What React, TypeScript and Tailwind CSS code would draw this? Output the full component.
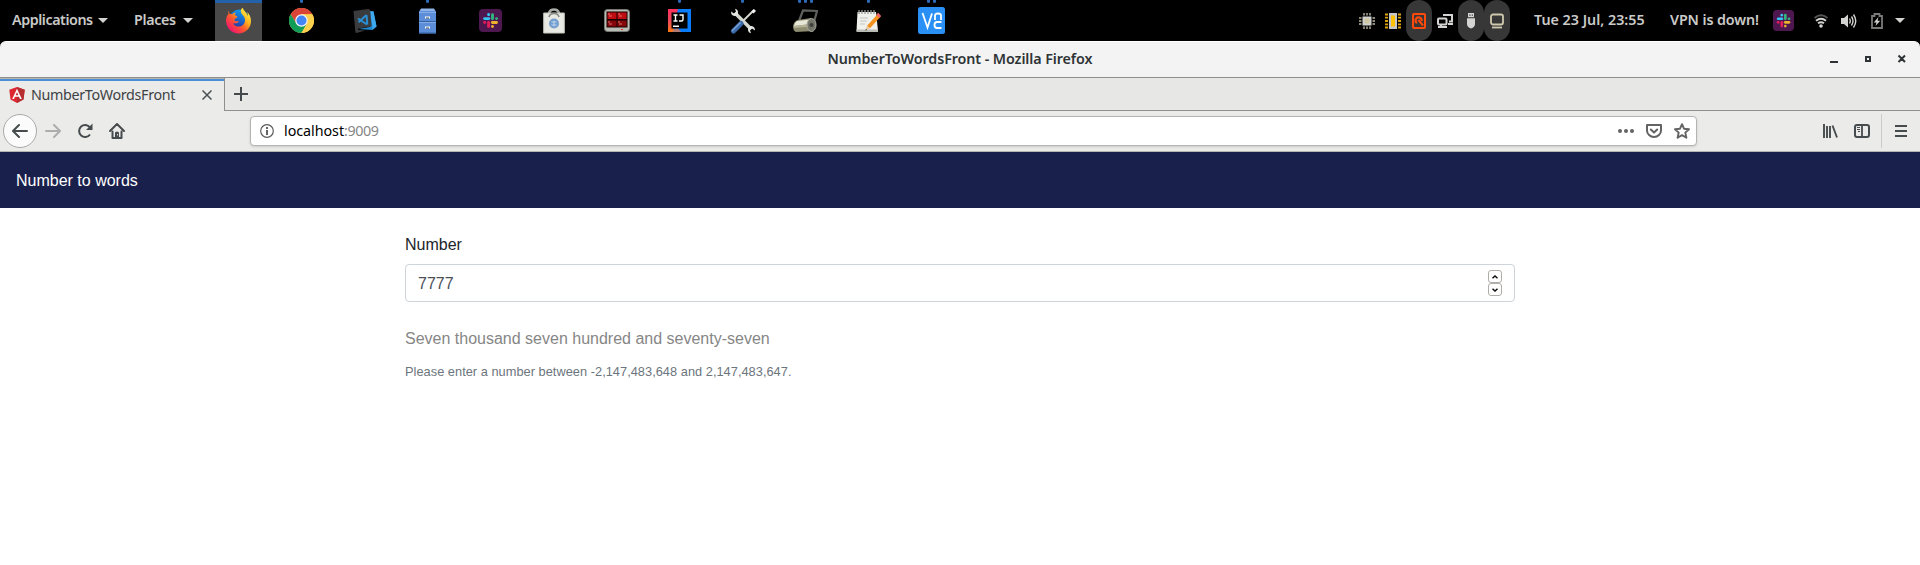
import type { ReactNode } from "react";

function Firefox() {
  return (
    <svg width="27" height="27" viewBox="0 0 27 27">
      <defs>
        <linearGradient id="ffBody" x1="0.9" y1="0.1" x2="0.2" y2="0.9">
          <stop offset="0" stopColor="#fff34a" />
          <stop offset="0.35" stopColor="#ffb31c" />
          <stop offset="0.62" stopColor="#ff5a2c" />
          <stop offset="1" stopColor="#f0186c" />
        </linearGradient>
        <linearGradient id="ffGlobe" x1="0.7" y1="0" x2="0.3" y2="1">
          <stop offset="0" stopColor="#0aa2f5" />
          <stop offset="1" stopColor="#2b2f9c" />
        </linearGradient>
      </defs>
      <circle cx="14" cy="12" r="9.5" fill="url(#ffGlobe)" />
      <path
        d="M3.2 3.6C3 5 3.200 6 3.600 6.800C1.500 9 .8 12 1.100 15C1.800 21.500 7 26.400 13.500 26.400C20.500 26.400 26 21 26 14C26 9.500 24 6.500 22 5C23 7 23 8 22.800 9C22 5.500 18.500 3.500 17.500 .7C15.500 2 15.300 4.500 16.500 6.500C17.800 8.600 20.500 10 20 14C19.500 18 16 20 12.800 19.500C9.500 19 8.400 17 8.600 16C11 17 12.500 16 14 14.800C13 13.600 11.500 14.600 9.800 13.700C9 12.800 9.500 11.500 12.500 10.200C12.400 8.800 10.800 8.800 10 8.200C9.700 7.200 10.300 6.200 11.200 5.600C9.300 5.600 8 6.400 7.300 7.400C6.500 7 5.500 7 4.800 7.100C4 6 3.500 5 3.200 3.600Z"
        fill="url(#ffBody)"
      />
    </svg>
  );
}

function Chrome() {
  return (
    <svg width="25" height="25" viewBox="0 0 50 50">
      <circle cx="25" cy="25" r="25" fill="#fdd04e" />
      <path d="M3.300 12.500A25 25 0 0 1 46.700 12.500L25 12.500L14.500 31Z" fill="#da4437" />
      <path d="M3.300 12.500A25 25 0 0 0 25 50L36 31L25 25L14.500 31Z" fill="#109d58" />
      <path d="M25 12.500H46.700A25 25 0 0 1 25 50L36 31Z" fill="#fdd04e" />
      <circle cx="25" cy="25" r="12.500" fill="#f4f4f4" />
      <circle cx="25" cy="25" r="10" fill="#4285f4" />
    </svg>
  );
}

function VsCode() {
  return (
    <svg width="24" height="26" viewBox="0 0 24 26">
      <path d="M17 3L20.500 3.500L23.500 18.500L19.500 22L5 21L17 19Z" fill="#1f8ad2" />
      <path d="M17 3L20.500 3.500L23.500 18.500L19.800 21.500Z" fill="#3fa9f0" />
      <path d="M.5 3L15.500 1Q17 1 17.200 2.500L18.600 18.500L5 20.500V22L12 22.500L3.500 25Q2.500 25 2.300 23.500Z" fill="#3a3b3d" />
      <path d="M13.500 7L14.300 16.500M13.500 7L5.500 14.300M14 16.500L5 10.500" fill="none" stroke="#2b8fd6" strokeWidth="2" />
    </svg>
  );
}

function FileCabinet() {
  return (
    <svg width="17" height="26" viewBox="0 0 17 26">
      <path d="M2 .5H15L17 4H0Z" fill="#8fb4ea" />
      <rect y="3" width="17" height="22.500" fill="#5b8dd9" />
      <path d="M0 4.500H17M0 14.500H17" stroke="#88aee8" />
      <path d="M0 13.500H17M0 25H17" stroke="#335f9f" />
      <path d="M6 9.500H11M6 19.500H11" stroke="#fff" strokeWidth="2" />
      <path d="M7 10H10M7 20H10" stroke="#345" strokeWidth="1" />
    </svg>
  );
}

function SlackIcon({ size }: { size: number }) {
  return (
    <svg width={size} height={size} viewBox="0 0 23 23">
      <rect width="23" height="23" rx="4" fill="#4f1750" />
      <g strokeWidth="2.900" strokeLinecap="round">
        <path d="M5.600 9.600H9.800" stroke="#36c5f0" />
        <path d="M9.600 5.500V5.700" stroke="#36c5f0" />
        <path d="M13.500 5.600V9.700" stroke="#2eb67d" />
        <path d="M17.500 9.600H17.600" stroke="#2eb67d" />
        <path d="M13.400 13.500H17.500" stroke="#ecb22e" />
        <path d="M13.500 17.500V17.600" stroke="#ecb22e" />
        <path d="M9.600 13.500V17.600" stroke="#e01e5a" />
        <path d="M5.600 13.500H5.700" stroke="#e01e5a" />
      </g>
    </svg>
  );
}

function SoftwareBag() {
  return (
    <svg width="22" height="26" viewBox="0 0 22 26">
      <path d="M6 8V5Q7 1.500 11 1.500Q15 1.500 16 5V8" fill="none" stroke="#a9aba6" strokeWidth="2.500" />
      <path d="M.7 5H21.300V25H.7Z" fill="#e9e9e4" stroke="#c4c4bd" />
      <path d="M6 9Q7 5.500 11 5.500Q15 5.500 16 9" fill="none" stroke="#888a85" strokeWidth="1.700" />
      <circle cx="11" cy="15.500" r="5" fill="#729fcf" />
      <path d="M8.500 14H13.500M8.500 17H13.500M11 12.500V18.500" stroke="#dbe7f5" strokeWidth=".7" />
    </svg>
  );
}

function Terminator() {
  return (
    <svg width="26" height="23" viewBox="0 0 26 23">
      <rect x=".5" y=".5" width="25" height="22" rx="3" fill="#b9bbb5" stroke="#777a74" />
      <rect x="2.500" y="2.500" width="21" height="16" fill="#160000" />
      <path d="M3.500 3.500H12.500V10H3.500ZM13.500 3.500H22.500V10H13.500Z" fill="#c00d12" />
      <path d="M3.500 11.500H12.500V17.500H3.500ZM13.500 11.500H22.500V17.500H13.500Z" fill="#860609" />
      <path d="M4 5H6M5 7H8M14 5H16M15 7H18M4 13H6M5 15H8M14 13H16M15 15H18" stroke="#f2a0a0" strokeWidth=".7" />
      <path d="M17 20.500H19" stroke="#e33" />
    </svg>
  );
}

function IntelliJ() {
  return (
    <svg width="23" height="23" viewBox="0 0 23 23">
      <defs>
        <linearGradient id="ijLeft" x1="0" y1="0" x2="0" y2="1">
          <stop offset="0" stopColor="#fe315d" />
          <stop offset="0.5" stopColor="#f0455e" />
          <stop offset="1" stopColor="#f97a12" />
        </linearGradient>
      </defs>
      <path d="M0 0H11L9 23H0Z" fill="url(#ijLeft)" />
      <path d="M10 0H23V23H9L5 19Z" fill="#087cfa" />
      <path d="M4 23L9 18L13 23Z" fill="#b07a72" />
      <rect x="3.500" y="3.500" width="16" height="16" fill="#000" />
      <path d="M5.500 6H9.500M7.500 6V12M5.500 12H9.500M11.500 6H15V10.500Q15 12 13.500 12H11M5 17.200H11" fill="none" stroke="#fff" strokeWidth="1.400" />
    </svg>
  );
}

function Tools() {
  return (
    <svg width="26" height="26" viewBox="0 0 26 26">
      <path d="M5 5L21 21" stroke="#d3d7cf" strokeWidth="3.500" />
      <path d="M1 3.500Q1 7.500 4.500 8Q8 8 8 4.500Q8 1.500 5 .8L6 3.500L4 5.500Z" fill="#e6e8e3" />
      <path d="M25 22.500Q25 18.500 21.500 18Q18 18 18 21.500Q18 24.500 21 25.200L20 22.500L22 20.500Z" fill="#e6e8e3" />
      <path d="M24 2L13 13" stroke="#d8dad5" strokeWidth="1.800" />
      <path d="M25 2L22.500 4.500" stroke="#eee" strokeWidth="3" />
      <path d="M11 15.500L3.500 23" stroke="#3a69a8" strokeWidth="5" strokeLinecap="round" />
      <path d="M10.500 14.500L2 23" stroke="#78a4da" strokeWidth="1.400" />
    </svg>
  );
}

function Roller() {
  return (
    <svg width="25" height="24" viewBox="0 0 25 24">
      <path d="M6 12L10 1.500L24 2L21 13" fill="none" stroke="#5d605c" strokeWidth="2.200" />
      <path d="M5 11L18 9L21 22L3 23Q0 22 0 17Q1 12 5 11Z" fill="#8d8c71" />
      <path d="M4 12L18 10.500L18 15L1 17Q2 13 4 12Z" fill="#e7e8d7" />
      <path d="M1 17L18 15V17.500L1 19Z" fill="#b5b496" />
      <ellipse cx="18.500" cy="16" rx="4.500" ry="6.500" fill="#74766c" stroke="#aaab9e" />
      <circle cx="18.500" cy="16" r="2" fill="#3d3f3b" />
    </svg>
  );
}

function Notes() {
  return (
    <svg width="26" height="24" viewBox="0 0 26 24">
      <path d="M1.500 3H20L22 22H.5Z" fill="#f0f0ed" />
      <path d="M.5 20.500H22V23H.5Z" fill="#babdb6" />
      <path d="M3 1V5M6 1V5M9 1V5M12 1V5M15 1V5M18 1V5" stroke="#9a9c97" strokeWidth="1.300" />
      <path d="M4 9H12M4 12H11M4 15H9" stroke="#c2c4bf" />
      <path d="M23 6.500L12.500 18" stroke="#f5921f" strokeWidth="4" />
      <path d="M25.200 7L23.400 9L20.200 5.700L22.200 3.700Z" fill="#e8646a" />
      <path d="M10.900 16.500L14 19.400L9.500 21.300Z" fill="#e9c79b" />
      <path d="M10 20L11 21L9.300 21.500Z" fill="#222" />
    </svg>
  );
}

function Vnc() {
  return (
    <svg width="27" height="27" viewBox="0 0 27 27">
      <rect width="27" height="27" rx="2.500" fill="#2b90f5" />
      <path d="M4.500 6L9.500 20.500L14 6.500M17 13V8.500Q17 6.500 20 6.500Q23 6.500 23 8.500V13M23.500 15H19Q16.500 15 16.500 18Q16.500 21 19 21H23.500" fill="none" stroke="#fff" strokeWidth="1.800" />
    </svg>
  );
}

const dock: { name: string; icon: ReactNode; dots: number; active?: boolean }[] = [
  { name: "firefox", icon: <Firefox />, dots: 0, active: true },
  { name: "chrome", icon: <Chrome />, dots: 1 },
  { name: "vscode", icon: <VsCode />, dots: 0 },
  { name: "files", icon: <FileCabinet />, dots: 1 },
  { name: "slack", icon: <SlackIcon size={23} />, dots: 0 },
  { name: "software", icon: <SoftwareBag />, dots: 0 },
  { name: "terminal", icon: <Terminator />, dots: 0 },
  { name: "idea", icon: <IntelliJ />, dots: 1 },
  { name: "tools", icon: <Tools />, dots: 1 },
  { name: "roller", icon: <Roller />, dots: 3 },
  { name: "notes", icon: <Notes />, dots: 1 },
  { name: "vnc", icon: <Vnc />, dots: 2 },
];

function Caret() {
  return (
    <svg width="10" height="5" viewBox="0 0 10 5">
      <path d="M0 0H10L5 5Z" fill="#d3d3d1" />
    </svg>
  );
}

function Tray() {
  return (
    <div className="flex h-full">
      <div className="flex w-[26px] items-center justify-center">
        <svg width="16" height="16" viewBox="0 0 16 16">
          <path d="M5 0V16M8 0V16M11 0V16M0 5H16M0 8H16M0 11H16" stroke="#b9b59d" strokeWidth="1.400" />
          <rect x="2.500" y="2.500" width="11" height="11" fill="#000" />
          <rect x="3.500" y="3.500" width="9" height="9" fill="#d0d0d0" />
          <rect x="5.500" y="5.500" width="5" height="5" fill="#cfc7a0" />
        </svg>
      </div>
      <div className="flex w-[26px] items-center justify-center">
        <svg width="16" height="16" viewBox="0 0 16 16">
          <path d="M0 1.500H16M0 4.700H16M0 8H16M0 11.300H16M0 14.500H16" stroke="#dda30a" strokeWidth="1.800" />
          <rect x="3" width="10" height="16" fill="#000" />
          <rect x="4" width="8" height="16" fill="#c6c6c6" />
          <rect x="6" y="2.500" width="4" height="11" fill="#ffc000" />
        </svg>
      </div>
      <div className="flex w-[26px] items-center justify-center rounded-full bg-[#373737]">
        <svg width="14" height="16" viewBox="0 0 14 16">
          <rect x="1" y="1" width="12" height="14" rx="1" fill="none" stroke="#ff4a0b" strokeWidth="2" />
          <path d="M5 10A3 3 0 1 1 9.500 8" fill="none" stroke="#ff4a0b" strokeWidth="2.200" />
          <path d="M6.500 7L11 12.500" stroke="#ff4a0b" strokeWidth="2" />
        </svg>
      </div>
      <div className="flex w-[26px] items-center justify-center">
        <svg width="16" height="14" viewBox="0 0 16 14" fill="none" stroke="#d4d4d2" strokeWidth="2">
          <path d="M7 2V1H15V7.500H12M11 10H16" />
          <rect x="1" y="4.500" width="8.500" height="6" rx="1" />
          <path d="M4 11V13M1 13H10" />
        </svg>
      </div>
      <div className="flex w-[26px] items-center justify-center rounded-full bg-[#373737]">
        <svg width="8" height="16" viewBox="0 0 8 16">
          <path d="M1 0H7V4.200H1Z" fill="#d4d4d2" />
          <path d="M2.300 1.500H3.500V2.700H2.300ZM4.700 1.500H5.900V2.700H4.700Z" fill="#373737" />
          <path d="M0 5.200H8V11Q8 14 4 15.500Q0 14 0 11Z" fill="#d4d4d2" />
        </svg>
      </div>
      <div className="flex w-[26px] items-center justify-center rounded-full bg-[#373737]">
        <svg width="14" height="16" viewBox="0 0 14 16" fill="none" stroke="#cfc9ad" strokeWidth="1.800">
          <rect x="1" y="1.500" width="12" height="10" rx="2" />
          <path d="M2 14.500H12" />
        </svg>
      </div>
    </div>
  );
}

function TopBar() {
  return (
    <div className="flex h-[41px] items-center bg-black text-[14.300px] font-semibold text-[#cacac8]">
      <div className="flex w-[207px] items-center pl-3">
        <span className="w-[86px] pb-0.5 tracking-[-0.44px]">Applications</span>
        <Caret />
        <span className="ml-[26px] w-[49px] pb-0.5 tracking-[-0.35px]">Places</span>
        <Caret />
      </div>
      <div className="flex h-full">
        {dock.map((d) => (
          <div key={d.name} className="flex w-[63px] justify-center">
            <div
              className={
                d.active
                  ? "relative flex w-[47px] items-center justify-center border-t-[3px] border-[#2461ab] bg-[#494949] pb-[3px]"
                  : "relative flex w-[47px] items-center justify-center"
              }
            >
              <div className="absolute inset-x-0 top-0 flex justify-center gap-[3px]">
                {Array.from({ length: d.dots }, (_, i) => (
                  <span key={i} className="h-[3px] w-[3px] rounded-b-full bg-[#2c6ab5]" />
                ))}
              </div>
              {d.icon}
            </div>
          </div>
        ))}
      </div>
      <div className="ml-auto flex h-full items-center">
        <Tray />
        <span className="ml-[24px] w-[136px] pb-0.5 whitespace-nowrap">Tue 23 Jul, 23:55</span>
        <span className="w-[103px] pb-0.5 tracking-[-0.1px] whitespace-nowrap">VPN is down!</span>
        <SlackIcon size={21} />
        <svg className="ml-[20px]" width="14" height="14" viewBox="0 0 14 14" fill="none" strokeWidth="1.900">
          <path d="M.5 4Q7-1.500 13.500 4" stroke="#555" />
          <path d="M2 6.700Q7 2.700 12 6.700M4 9.300Q7 7 10 9.300" stroke="#d3d3d1" />
          <circle cx="7" cy="12" r="1.800" fill="#d3d3d1" />
        </svg>
        <svg className="ml-[13px]" width="16" height="16" viewBox="0 0 16 16" fill="none" stroke="#d3d3d1" strokeWidth="1.400">
          <path d="M0 5H3L7 1.500V14.500L3 11H0Z" fill="#d3d3d1" stroke="none" />
          <path d="M8.500 5.500Q10 8 8.500 10.500M10.500 3.500Q13.500 8 10.500 12.500M12.500 1.500Q17 8 12.500 14.500" />
        </svg>
        <svg className="ml-[14px]" width="12" height="16" viewBox="0 0 12 16">
          <path d="M1 3H3.500V1H8.500V3H11V15H1Z" fill="none" stroke="#7a7a79" strokeWidth="1.800" />
          <path d="M7.500 4L2.800 9.500H5.500L4.500 13L9.200 7.800H6.500Z" fill="#d3d3d1" />
        </svg>
        <div className="mr-[15px] ml-[12px]">
          <Caret />
        </div>
      </div>
    </div>
  );
}

function TitleBar() {
  return (
    <div className="bg-black">
      <div className="grid h-[36px] grid-cols-[1fr_auto_1fr] items-center rounded-t-[6px] border-t border-white bg-[#f3f3f3]">
        <span />
        <span className="pb-0.5 text-[14.300px] font-semibold tracking-[-0.09px] text-[#2e3436]">NumberToWordsFront - Mozilla Firefox</span>
        <div className="flex items-center justify-end pr-[14px] pb-px text-[#2e3436]">
          <svg width="76" height="10" viewBox="0 0 76 10" fill="none" stroke="currentColor" strokeWidth="2">
            <path d="M0 8H8M36 3H40V7H36ZM68.500 1.500L75 8M75 1.500L68.500 8" />
          </svg>
        </div>
      </div>
    </div>
  );
}

function TabBar() {
  return (
    <div className="flex h-[34px] border-t border-[#8f8f8d] bg-[#e7e7e6]">
      <div className="flex h-[33px] w-[225px] items-center border-r border-[#8f8f8d] bg-[#ebebea] shadow-[inset_0_1px_0_#b9b5ae,inset_0_3px_0_#4a90d9]">
        <svg className="ml-[9px]" width="16" height="16" viewBox="0 0 16 16">
          <path d="M8 0L15.700 2.700L14.500 12.500L8 16L1.500 12.500L.3 2.700Z" fill="#dd2832" />
          <path d="M8 0L15.700 2.700L14.500 12.500L8 16Z" fill="#b52e31" />
          <path fillRule="evenodd" d="M8 1.800L12.800 12H11L10 9.700H6L5 12H3.200ZM8 5.200L9.400 8.300H6.600Z" fill="#fff" />
        </svg>
        <span className="ml-[6px] w-[171px] text-[14.300px] tracking-[-0.33px] text-[#3d4244]">NumberToWordsFront</span>
        <svg width="10" height="10" viewBox="0 0 10 10" stroke="#4a4f51" strokeWidth="1.500">
          <path d="M.5 .5L9.500 9.500M9.500 .5L.5 9.500" />
        </svg>
      </div>
      <div className="flex flex-1 items-center border-b border-[#8f8f8d] pl-[9px]">
        <svg width="14" height="14" viewBox="0 0 14 14" stroke="#44494b" strokeWidth="2">
          <path d="M7 0V14M0 7H14" />
        </svg>
      </div>
    </div>
  );
}

function Toolbar() {
  return (
    <div className="flex h-[41px] items-center border-b border-[#b5b5b2] bg-[#ebebea] text-[#464b4d]">
      <div className="flex w-[250px] items-center pl-[3px]">
        <div className="flex size-[34px] items-center justify-center rounded-full border border-[#a9a9a8] bg-[#fbfbfb]">
          <svg width="16" height="16" viewBox="0 0 16 16" fill="none" stroke="currentColor" strokeWidth="2" strokeLinecap="round" strokeLinejoin="round">
            <path d="M15 8H1.500M7 2L1 8L7 14" />
          </svg>
        </div>
        <svg className="ml-[8px] text-[#acaeae]" width="16" height="16" viewBox="0 0 16 16" fill="none" stroke="currentColor" strokeWidth="2" strokeLinecap="round" strokeLinejoin="round">
          <path d="M1 8H14.500M9 2L15 8L9 14" />
        </svg>
        <svg className="ml-[16px]" width="16" height="16" viewBox="0 0 16 16" fill="none" stroke="currentColor" strokeWidth="2">
          <path d="M13 11.500A6 6 0 1 1 13 4.500" />
          <path d="M15.500 .5V7H9Z" fill="currentColor" stroke="none" />
        </svg>
        <svg className="ml-[16px]" width="16" height="16" viewBox="0 0 16 16" fill="none" stroke="currentColor" strokeWidth="2" strokeLinecap="round" strokeLinejoin="round">
          <path d="M1 8L8 1L15 8M3.500 8.500V15H12.500V8.500" />
          <path d="M6 15V10Q6 8.500 8 8.500Q10 8.500 10 10V15Z" fill="currentColor" stroke="none" />
          <path d="M8.500 11.500V12" stroke="#ebebea" strokeWidth="1" />
        </svg>
      </div>
      <div className="flex h-[30px] w-[1447px] items-center rounded-[4px] border border-[#b4b4b2] bg-white pr-[6px] pl-[9px] shadow-sm">
        <svg width="14" height="14" viewBox="0 0 14 14" fill="none" stroke="#5c5c5c" strokeWidth="1.200">
          <circle cx="7" cy="7" r="6.300" />
          <path d="M7 3V5M7 6V11" strokeWidth="1.900" />
        </svg>
        <span className="ml-[10px] text-[14.300px] tracking-[-0.04px] text-black">
          localhost<span className="tracking-[-0.4px] text-[#868686]">:9009</span>
        </span>
        <div className="ml-auto flex items-center gap-3 text-[#636363]">
          <svg width="16" height="16" viewBox="0 0 16 16" fill="currentColor">
            <circle cx="2" cy="8" r="2" />
            <circle cx="8" cy="8" r="2" />
            <circle cx="14" cy="8" r="2" />
          </svg>
          <svg width="16" height="16" viewBox="0 0 16 16" fill="none" stroke="currentColor" strokeWidth="2" strokeLinejoin="round" strokeLinecap="round">
            <path d="M1 2H15V7.500A7 6.500 0 0 1 1 7.500ZM4.800 6.500L8 9.500L11.200 6.500" />
          </svg>
          <svg width="16" height="16" viewBox="0 0 16 16" fill="none" stroke="currentColor" strokeWidth="1.900" strokeLinejoin="round">
            <path d="M8 1.200L10 5.700L15 6.200L11.300 9.600L12.400 14.700L8 12.100L3.600 14.700L4.700 9.600L1 6.200L6 5.700Z" />
          </svg>
        </div>
      </div>
      <div className="ml-auto flex items-center pr-[13px]">
        <svg width="16" height="16" viewBox="0 0 16 16" fill="none" stroke="currentColor" strokeWidth="2">
          <path d="M2 1V15M5 3V15M8 3V15M10.500 2.500L15 14.500" strokeWidth="1.900" />
        </svg>
        <svg className="ml-[16px]" width="16" height="16" viewBox="0 0 16 16" fill="none" stroke="currentColor" strokeWidth="2">
          <rect x="1" y="2" width="14" height="12" rx="2" />
          <path d="M8 2V14" strokeWidth="1.800" />
          <path d="M3 4.500H6M3 6.500H6M4 8.500H6" strokeWidth="1" />
        </svg>
        <span className="ml-[11px] h-[34px] w-px bg-[#cbcbca]" />
        <svg className="ml-[13px]" width="12" height="12" viewBox="0 0 12 12" stroke="currentColor" strokeWidth="2">
          <path d="M0 1H12M0 6H12M0 11H12" />
        </svg>
      </div>
    </div>
  );
}

function SpinButton({ d }: { d: string }) {
  return (
    <button type="button" className="flex h-[13px] w-[14px] items-center justify-center rounded-[3px] border border-[#b0aea9] bg-white">
      <svg width="6" height="4" viewBox="0 0 6 4" fill="none" stroke="#111" strokeWidth="1.500">
        <path d={d} />
      </svg>
    </button>
  );
}

export default function App() {
  return (
    <div className="h-[565px] w-[1920px] overflow-hidden bg-white font-['Noto_Sans',sans-serif]">
      <TopBar />
      <TitleBar />
      <TabBar />
      <Toolbar />
      <main className="font-['Liberation_Sans',Arial,sans-serif] text-base text-[#212529]">
        <nav className="flex h-14 items-center bg-[#1a204c] px-4 pt-0.5 text-white">Number to words</nav>
        <section className="mx-auto flex w-[1110px] flex-col pt-[25px]">
          <label>Number</label>
          <div className="mt-[7px] flex h-[38px] items-center justify-between rounded-[4px] border border-[#ced4da] px-3 text-[#495057]">
            <span className="pt-0.5">7777</span>
            <div className="flex flex-col">
              <SpinButton d="M.5 3.300L3 1L5.500 3.300" />
              <SpinButton d="M.5 .7L3 3L5.500 .7" />
            </div>
          </div>
          <p className="mt-[25px] text-[#868686]">Seven thousand seven hundred and seventy-seven</p>
          <small className="mt-[11px] text-[12.800px] leading-[19px] tracking-[0.025px] text-[#6c757d]">
            Please enter a number between -2,147,483,648 and 2,147,483,647.
          </small>
        </section>
      </main>
    </div>
  );
}
